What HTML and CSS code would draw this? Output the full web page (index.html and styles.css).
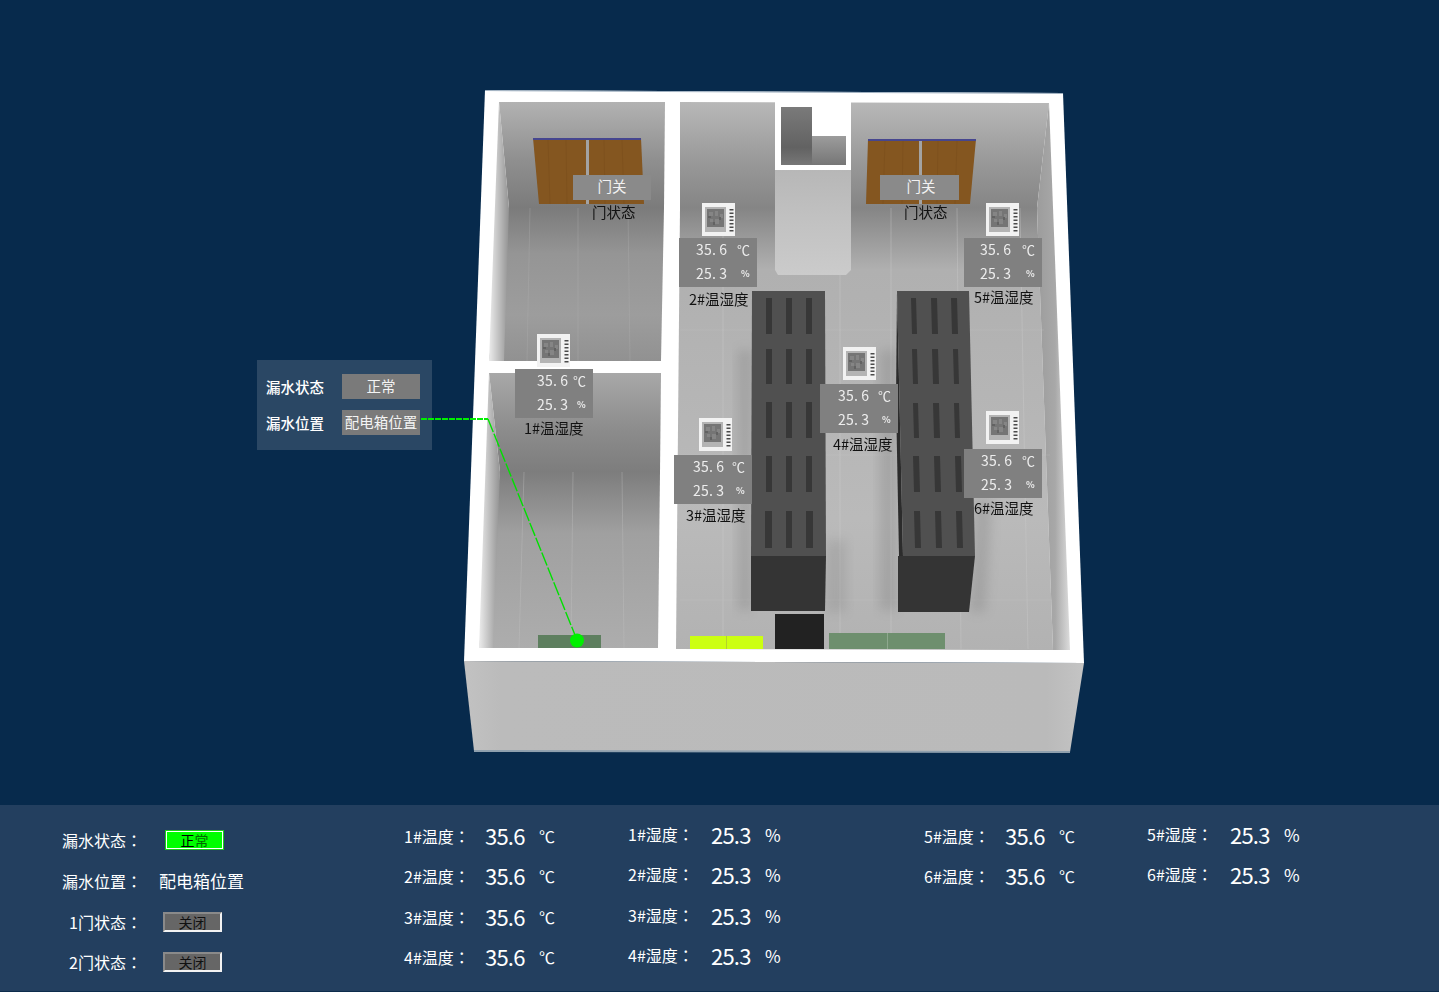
FILE: index.html
```html
<!DOCTYPE html>
<html lang="zh-CN">
<head>
<meta charset="utf-8">
<title>机房环境监控</title>
<link rel="stylesheet" href="styles.css">
</head>
<body>
<main class="scene">
  <section class="leak">
    <span class="leak-key">漏水状态</span><span class="leak-val">正常</span>
    <span class="leak-key">漏水位置</span><span class="leak-val">配电箱位置</span>
  </section>

  <svg class="room" viewBox="0 0 1439 805" width="1439" height="805" aria-hidden="true">
    <defs>
      <linearGradient id="backA" x1="0" y1="0" x2="0" y2="1"><stop offset="0" stop-color="#b2b2b2"/><stop offset=".55" stop-color="#8f8f8f"/><stop offset="1" stop-color="#7b7b7b"/></linearGradient>
      <linearGradient id="backB" x1="0" y1="0" x2="0" y2="1"><stop offset="0" stop-color="#a8a8a8"/><stop offset=".6" stop-color="#8b8b8b"/><stop offset="1" stop-color="#7d7d7d"/></linearGradient>
      <linearGradient id="backC" x1="0" y1="0" x2="0" y2="1"><stop offset="0" stop-color="#b8b8b8"/><stop offset=".6" stop-color="#979797"/><stop offset="1" stop-color="#858585"/></linearGradient>
      <linearGradient id="floorA" x1="0" y1="0" x2="0" y2="1"><stop offset="0" stop-color="#7b7b7b"/><stop offset=".3" stop-color="#959595"/><stop offset=".7" stop-color="#9d9d9d"/><stop offset="1" stop-color="#919191"/></linearGradient>
      <linearGradient id="floorB" x1="0" y1="0" x2="0" y2="1"><stop offset="0" stop-color="#7d7d7d"/><stop offset=".35" stop-color="#a0a0a0"/><stop offset="1" stop-color="#adadad"/></linearGradient>
      <linearGradient id="floorC" x1="0" y1="0" x2="0" y2="1"><stop offset="0" stop-color="#858585"/><stop offset=".14" stop-color="#b0b0b0"/><stop offset=".7" stop-color="#bababa"/><stop offset="1" stop-color="#b2b2b2"/></linearGradient>
      <linearGradient id="wallL" x1="0" y1="0" x2="1" y2="0"><stop offset="0" stop-color="#ececec"/><stop offset="1" stop-color="#929292"/></linearGradient>
      <linearGradient id="wallR" x1="0" y1="0" x2="1" y2="0"><stop offset="0" stop-color="#9c9c9c"/><stop offset=".55" stop-color="#a8a8a8"/><stop offset="1" stop-color="#dcdcdc"/></linearGradient>
      <linearGradient id="hole" x1="0" y1="0" x2="0" y2="1"><stop offset="0" stop-color="#7a7a7a"/><stop offset=".7" stop-color="#626262"/><stop offset="1" stop-color="#777"/></linearGradient>
      <linearGradient id="hole2" x1="0" y1="0" x2="0" y2="1"><stop offset="0" stop-color="#9c9c9c"/><stop offset="1" stop-color="#767676"/></linearGradient>
      <linearGradient id="pillar" x1="0" y1="0" x2="0" y2="1"><stop offset="0" stop-color="#a9a9a9"/><stop offset=".7" stop-color="#c2c2c2"/><stop offset="1" stop-color="#cbcbcb"/></linearGradient>
      <linearGradient id="front" x1="0" y1="0" x2="1" y2="0"><stop offset="0" stop-color="#c2c2c2"/><stop offset=".06" stop-color="#bbb"/><stop offset=".94" stop-color="#bababa"/><stop offset="1" stop-color="#c4c4c4"/></linearGradient>
      <filter id="soft" x="-40%" y="-40%" width="180%" height="180%"><feGaussianBlur stdDeviation="6"/></filter>
      <symbol id="sensor-icon" viewBox="0 0 33 33">
        <rect width="33" height="33" fill="#f2f2f2"/>
        <rect x="3" y="4" width="21" height="25" fill="#b4b4b4"/>
        <rect x="5" y="6" width="17" height="18" fill="#757575"/>
        <path d="M7 9h4v4H7zM13 8h3v5h-3zM18 11h3v4h-3zM8 16h3v3H8zM13 16h4v5h-4z" fill="#858585"/>
        <path d="M6 13h3v2H6zM11 19h2v3h-2zM17 14h2v3h-2z" fill="#626262"/>
        <g fill="#4a4a4a">
          <rect x="27.500" y="6" width="4" height="1.500"/><rect x="27.500" y="9.500" width="4" height="1.500"/><rect x="27.500" y="13" width="4" height="1.500"/>
          <rect x="27.500" y="16.500" width="4" height="1.500"/><rect x="27.500" y="20" width="4" height="1.500"/><rect x="27.500" y="23.500" width="4" height="1.500"/><rect x="27.500" y="27" width="4" height="1.500"/>
        </g>
      </symbol>
    </defs>

    <!-- shell -->
    <polygon points="485,90 1063,93 1084,663 464,661" fill="#fff"/>
    <polygon points="485,90 1063,93 1063,94 485,91" fill="#9fb0c0"/>
    <polygon points="464,661 1084,663 1070,752 474,751" fill="url(#front)"/>
    <polygon points="474,750 1070,751 1070,753 474,752" fill="#8fa0ae"/>

    <!-- upper-left room -->
    <polygon points="507,208 664,208 661,361 489,361" fill="url(#floorA)"/>
    <polygon points="499,102 665,102 664,208 509,208" fill="url(#backA)"/>
    <polygon points="499,102 509,208 504,361 489,361" fill="url(#wallL)"/>
    <path d="M530 208l-3 153M578 208v153M628 208l2 153" stroke="#b3b3b3" stroke-width="1" fill="none" opacity=".3"/>

    <!-- lower-left room -->
    <polygon points="500,472 660,472 658,648 479,648" fill="url(#floorB)"/>
    <polygon points="489,373 661,373 660,472 500,472" fill="url(#backB)"/>
    <polygon points="489,373 500,472 493,648 479,648" fill="url(#wallL)"/>
    <path d="M524 472l-5 176M573 472l-2 176M622 472l2 176" stroke="#c2c2c2" stroke-width="1" fill="none" opacity=".35"/>
    <rect x="538" y="635" width="63" height="13" fill="#5e7f5f"/>

    <!-- main room -->
    <polygon points="680,208 1037,208 1053,650 676,649" fill="url(#floorC)"/>
    <polygon points="680,102 1049,103 1037,208 680,208" fill="url(#backC)"/>
    <polygon points="1049,103 1070,650 1053,650 1037,208" fill="url(#wallR)"/>
    <path d="M723 208v441M891 208v441M957 208l4 441M1020 208l8 441M840 208v441" stroke="#cdcdcd" stroke-width="1" fill="none" opacity=".35"/>
    <path d="M680 455h370M680 600h372M680 330h364" stroke="#c9c9c9" stroke-width="1" fill="none" opacity=".25"/>

    <!-- doors -->
    <polygon points="533,138 641,138 644,204 539,204" fill="#845620"/>
    <path d="M548 140l2 64M566 140l1 64M604 140l1 64M622 140l2 64" stroke="#6f4618" stroke-width="1" fill="none" opacity=".3"/>
    <polygon points="533,138 641,138 641,140 533,140" fill="#46468f"/>
    <rect x="586" y="140" width="3" height="64" fill="#a3a3a3"/>
    <polygon points="868,139 976,139 970,204 866,204" fill="#845620"/>
    <path d="M885 141l-2 63M903 141l-1 63M938 141l-1 63M957 141l-2 63" stroke="#6f4618" stroke-width="1" fill="none" opacity=".3"/>
    <polygon points="868,139 976,139 976,141 868,141" fill="#46468f"/>
    <rect x="919" y="141" width="3" height="63" fill="#a3a3a3"/>

    <!-- pillar -->
    <polygon points="775,102 851,102 851,270 846,275 778,275 775,270" fill="url(#pillar)"/>
    <rect x="775" y="102" width="76" height="68" fill="#fff"/>
    <rect x="781" y="107" width="31" height="58" fill="url(#hole)"/>
    <rect x="812" y="136" width="34" height="29" fill="url(#hole2)"/>

    <!-- soft shadows of the racks -->
    <polygon points="738,350 752,350 752,610 738,610" fill="#555" opacity=".2" filter="url(#soft)"/>
    <polygon points="826,540 846,540 846,612 826,612" fill="#555" opacity=".15" filter="url(#soft)"/>
    <polygon points="880,350 897,350 897,610 880,610" fill="#555" opacity=".2" filter="url(#soft)"/>
    <polygon points="975,500 992,500 985,612 970,612" fill="#555" opacity=".2" filter="url(#soft)"/>

    <!-- left rack -->
    <polygon points="752,291 825,291 826,556 751,556" fill="#505050"/>
    <polygon points="751,556 826,556 825,611 751,611" fill="#343434"/>
    <g fill="#373737">
      <rect x="766" y="298" width="6" height="36"/><rect x="786" y="298" width="6" height="36"/><rect x="806" y="298" width="6" height="36"/>
      <rect x="766" y="349" width="6" height="35"/><rect x="786" y="349" width="6" height="35"/><rect x="806" y="349" width="6" height="35"/>
      <rect x="766" y="402" width="6" height="36"/><rect x="786" y="402" width="6" height="36"/><rect x="806" y="402" width="6" height="36"/>
      <rect x="766" y="456" width="6" height="36"/><rect x="786" y="456" width="6" height="36"/><rect x="806" y="456" width="6" height="36"/>
      <rect x="765" y="511" width="7" height="37"/><rect x="786" y="511" width="6" height="37"/><rect x="806" y="511" width="7" height="37"/>
    </g>

    <!-- right rack -->
    <polygon points="897,291 896,400 899,556 903,556" fill="#2c2c2c"/>
    <polygon points="897,291 969,291 975,556 903,556" fill="#505050"/>
    <polygon points="898,556 975,556 969,612 898,612" fill="#343434"/>
    <g fill="#373737">
      <polygon points="911,298 916,298 917,334 912,334"/><polygon points="931,298 937,298 938,334 932,334"/><polygon points="951,298 957,298 958,334 952,334"/>
      <polygon points="912,349 917,349 918,384 913,384"/><polygon points="932,349 938,349 939,384 933,384"/><polygon points="953,349 958,349 959,384 954,384"/>
      <polygon points="913,403 918,403 919,438 914,438"/><polygon points="933,403 939,403 940,438 934,438"/><polygon points="954,403 959,403 960,438 955,438"/>
      <polygon points="913,456 919,456 920,492 914,492"/><polygon points="934,456 940,456 941,492 935,492"/><polygon points="955,456 961,456 962,492 956,492"/>
      <polygon points="914,511 920,511 921,548 915,548"/><polygon points="935,511 941,511 942,548 936,548"/><polygon points="956,511 962,511 963,548 957,548"/>
    </g>

    <!-- equipment along the front wall -->
    <rect x="690" y="636" width="73" height="13" fill="#ccff12"/>
    <rect x="726" y="636" width="1" height="13" fill="#b4d32a"/>
    <rect x="775" y="614" width="49" height="35" fill="#222"/>
    <rect x="829" y="633" width="116" height="16" fill="#6e8f6e"/>
    <rect x="887" y="633" width="1" height="16" fill="#8ea88e"/>

    <!-- sensors -->
    <use href="#sensor-icon" x="537" y="334" width="33" height="33"/>
    <use href="#sensor-icon" x="702" y="203" width="33" height="33"/>
    <use href="#sensor-icon" x="699" y="418" width="33" height="33"/>
    <use href="#sensor-icon" x="843" y="347" width="33" height="33"/>
    <use href="#sensor-icon" x="986" y="203" width="33" height="33"/>
    <use href="#sensor-icon" x="986" y="411" width="33" height="33"/>

    <!-- leak trace -->
    <polyline points="421,419 488,419" fill="none" stroke="#00f000" stroke-width="2" stroke-dasharray="6 1"/>
    <polyline points="488,419 577,640" fill="none" stroke="#00e000" stroke-width="1.4" stroke-dasharray="14 2"/>
    <ellipse cx="577" cy="640.5" rx="7" ry="7" fill="#00f000"/>
  </svg>

  <div class="door-tag tag-left">门关</div>
  <div class="door-name name-left">门状态</div>
  <div class="door-tag tag-right">门关</div>
  <div class="door-name name-right">门状态</div>

  <div class="sensor s1"><div class="row"><span class="num">35. 6</span><span class="unit">℃</span></div><div class="row"><span class="num">25. 3</span><span class="unit pct">%</span></div><div class="name">1#温湿度</div></div>
  <div class="sensor s2"><div class="row"><span class="num">35. 6</span><span class="unit">℃</span></div><div class="row"><span class="num">25. 3</span><span class="unit pct">%</span></div><div class="name">2#温湿度</div></div>
  <div class="sensor s3"><div class="row"><span class="num">35. 6</span><span class="unit">℃</span></div><div class="row"><span class="num">25. 3</span><span class="unit pct">%</span></div><div class="name">3#温湿度</div></div>
  <div class="sensor s4"><div class="row"><span class="num">35. 6</span><span class="unit">℃</span></div><div class="row"><span class="num">25. 3</span><span class="unit pct">%</span></div><div class="name">4#温湿度</div></div>
  <div class="sensor s5"><div class="row"><span class="num">35. 6</span><span class="unit">℃</span></div><div class="row"><span class="num">25. 3</span><span class="unit pct">%</span></div><div class="name">5#温湿度</div></div>
  <div class="sensor s6"><div class="row"><span class="num">35. 6</span><span class="unit">℃</span></div><div class="row"><span class="num">25. 3</span><span class="unit pct">%</span></div><div class="name">6#温湿度</div></div>
</main>

<footer class="panel">
  <div class="status">
    <span class="st-key">漏水状态<span class="colon" lang="zh-TW">：</span></span><span class="st-val"><b class="badge ok">正<i>常</i></b></span>
    <span class="st-key">漏水位置<span class="colon" lang="zh-TW">：</span></span><span class="st-val st-text">配电箱位置</span>
    <span class="st-key">1门状态<span class="colon" lang="zh-TW">：</span></span><span class="st-val"><b class="badge off">关闭</b></span>
    <span class="st-key">2门状态<span class="colon" lang="zh-TW">：</span></span><span class="st-val"><b class="badge off">关闭</b></span>
  </div>
  <div class="readings temp">
    <div class="reading"><span class="k">1#温度<span class="colon" lang="zh-TW">：</span></span><span class="v">35.6</span><span class="u">℃</span></div>
    <div class="reading"><span class="k">2#温度<span class="colon" lang="zh-TW">：</span></span><span class="v">35.6</span><span class="u">℃</span></div>
    <div class="reading"><span class="k">3#温度<span class="colon" lang="zh-TW">：</span></span><span class="v">35.6</span><span class="u">℃</span></div>
    <div class="reading"><span class="k">4#温度<span class="colon" lang="zh-TW">：</span></span><span class="v">35.6</span><span class="u">℃</span></div>
  </div>
  <div class="readings hum">
    <div class="reading"><span class="k">1#湿度<span class="colon" lang="zh-TW">：</span></span><span class="v">25.3</span><span class="u">%</span></div>
    <div class="reading"><span class="k">2#湿度<span class="colon" lang="zh-TW">：</span></span><span class="v">25.3</span><span class="u">%</span></div>
    <div class="reading"><span class="k">3#湿度<span class="colon" lang="zh-TW">：</span></span><span class="v">25.3</span><span class="u">%</span></div>
    <div class="reading"><span class="k">4#湿度<span class="colon" lang="zh-TW">：</span></span><span class="v">25.3</span><span class="u">%</span></div>
  </div>
  <div class="readings temp">
    <div class="reading"><span class="k">5#温度<span class="colon" lang="zh-TW">：</span></span><span class="v">35.6</span><span class="u">℃</span></div>
    <div class="reading"><span class="k">6#温度<span class="colon" lang="zh-TW">：</span></span><span class="v">35.6</span><span class="u">℃</span></div>
  </div>
  <div class="readings hum">
    <div class="reading"><span class="k">5#湿度<span class="colon" lang="zh-TW">：</span></span><span class="v">25.3</span><span class="u">%</span></div>
    <div class="reading"><span class="k">6#湿度<span class="colon" lang="zh-TW">：</span></span><span class="v">25.3</span><span class="u">%</span></div>
  </div>
</footer>
</body>
</html>
```
FILE: styles.css
```css
* { box-sizing: border-box; }

html, body {
  margin: 0;
  height: 992px;
  overflow: hidden;
  background: #072a4c;
  font-family: "Noto Sans CJK SC", "Noto Sans", sans-serif;
}

/* Canvas: the drawing and everything pinned on it */
.scene {
  position: relative;
  width: 1439px;
  height: 805px;
  filter: blur(.4px);
}

/* The drawing sits above the call-out so the leak trace can start on it */
.room { display: block; position: relative; }

.door-tag {
  position: absolute;
  top: 175px;
  width: 78px;
  height: 25px;
  background: #8a8a8a;
  color: #f2f2f2;
  font-size: 14.5px;
  line-height: 22px;
  text-align: center;
}
.tag-left { left: 573px; }
.tag-right { left: 880px; width: 79px; padding-left: 3px; }

.door-name {
  position: absolute;
  top: 202px;
  color: #111;
  font-size: 14.5px;
  line-height: 20px;
}
.name-left { left: 592px; }
.name-right { left: 904px; }

/* Leak call-out */
.leak {
  position: absolute;
  left: 257px;
  top: 360px;
  width: 175px;
  height: 90px;
  padding: 14px 12px 0 9px;
  background: #2a4764;
  display: grid;
  grid-template-columns: 76px 78px;
  grid-auto-rows: 25px;
  row-gap: 11px;
  align-items: center;
  color: #fff;
  font-size: 14.5px;
  line-height: 23px;
}
.leak-key { font-weight: 500; }
.leak-val {
  height: 25px;
  background: #7a7a7a;
  line-height: 23px;
  text-align: center;
  white-space: nowrap;
  color: #f4f4f4;
}

/* Sensor read-outs */
.sensor {
  position: absolute;
  width: 78px;
  height: 49px;
  padding-left: var(--tx);
  background: #808080;
  color: #ededed;
}
.row {
  position: relative;
  height: 23.5px;
  font-size: 14px;
  line-height: 22px;
  letter-spacing: .2px;
}
.unit {
  position: absolute;
  left: calc(58px - var(--tx));
  top: 1px;
  font-size: 13px;
}
.pct {
  left: calc(62px - var(--tx));
  font-size: 9px;
  font-weight: 700;
}
.name {
  position: absolute;
  left: var(--nx);
  top: var(--ny);
  color: #111;
  font-size: 14.5px;
  line-height: 18px;
  white-space: nowrap;
}
.s1 { left: 515px; top: 369px; --tx: 22px; --nx: 9px; --ny: 50px; }
.s2 { left: 679px; top: 238px; --tx: 17px; --nx: 10px; --ny: 52px; }
.s3 { left: 674px; top: 455px; --tx: 19px; --nx: 12px; --ny: 51px; }
.s4 { left: 820px; top: 384px; --tx: 18px; --nx: 13px; --ny: 51px; }
.s5 { left: 964px; top: 238px; --tx: 16px; --nx: 10px; --ny: 50px; }
.s6 { left: 964px; top: 449px; --tx: 17px; --nx: 10px; --ny: 50px; }

/* Bottom panel */
.panel {
  height: 187px;
  background: #233f5f;
  border-bottom: 1px solid #0d2c4c;
  display: grid;
  grid-template-columns: 404px 224px 296px 223px 1fr;
  color: #fff;
}

.colon { font-family: "Noto Sans CJK TC", sans-serif; }

.status {
  display: grid;
  grid-template-columns: 80px 1fr;
  column-gap: 17px;
  grid-auto-rows: 40.67px;
  align-items: center;
  padding: 15px 0 0 62px;
  font-size: 16px;
  line-height: 20px;
}
.st-key { text-align: right; white-space: nowrap; }
.st-val { display: flex; }
.st-text { font-size: 17px; }

.badge {
  display: block;
  width: 59px;
  height: 20px;
  font-weight: 400;
  font-size: 14px;
  line-height: 18px;
  text-align: center;
  color: #111;
}
.ok {
  margin-left: 6px;
  background: #00ff00;
  border: 1px solid #fff;
  outline: 1px solid #18d018;
  outline-offset: -1px;
  box-shadow: inset 0 0 0 1px #fff;
  color: #000;
}
.ok i { font-style: normal; color: #006b00; }
.off {
  margin-left: 4px;
  background: #666;
  border: 2px solid;
  border-color: #8a8a8a #f2f2f2 #f2f2f2 #8a8a8a;
  line-height: 16px;
}

.readings {
  display: grid;
  grid-auto-rows: 40.33px;
  align-content: start;
}
.temp { padding-top: 11px; }
.hum { padding-top: 9px; }

.reading {
  display: flex;
  align-items: center;
  font-size: 16px;
  line-height: 20px;
  white-space: nowrap;
}
.k { width: 81px; }
.hum .k { width: 83px; }
.v { font-size: 22px; line-height: 24px; letter-spacing: -.8px; }
.temp .v { width: 54px; margin-top: -2px; }
.hum .v { width: 54px; }
.u { font-size: 16px; }
.hum .u { margin-top: 2px; font-size: 17px; }
```
